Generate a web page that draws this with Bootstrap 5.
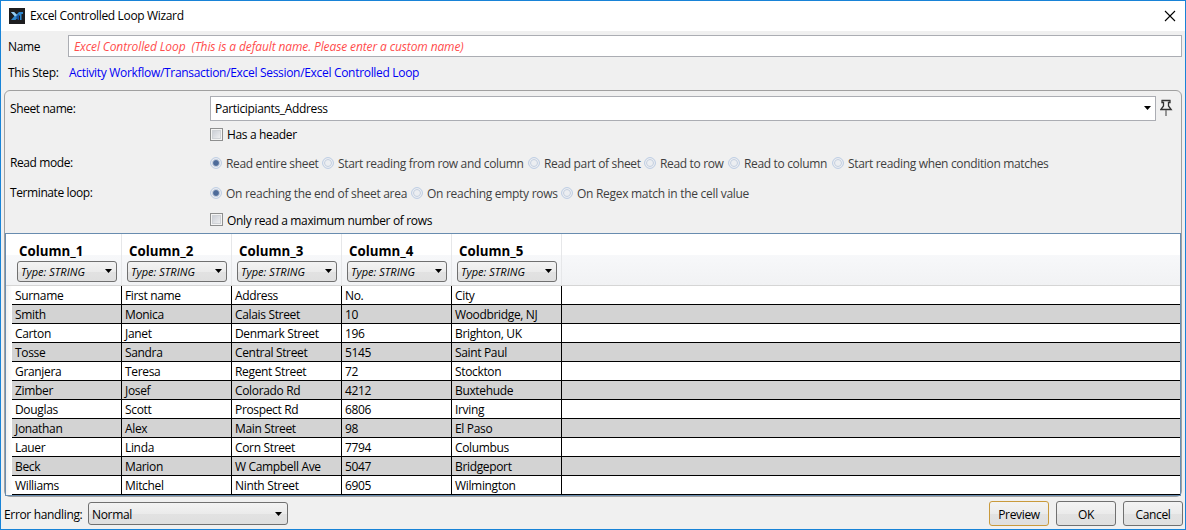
<!DOCTYPE html>
<html lang="en">
<head>
<meta charset="utf-8">
<title>Excel Controlled Loop Wizard</title>
<link href="https://cdn.jsdelivr.net/npm/bootstrap@5.3.0/dist/css/bootstrap.min.css" rel="stylesheet">
<style>
body{font:12px/16px "Open Sans","Noto Sans",sans-serif;letter-spacing:-.34px;color:#000;background:#f0f0f0}
.win{width:1186px;height:530px;border:1px solid #1883d7;background:#f0f0f0;overflow:hidden;white-space:nowrap}
.titlebar{height:30px;background:#fff;padding:0 9px 0 8px}
.titlebar span{margin-left:5px}
.field{background:#fff;border:1px solid #abadb3}
.name-row{height:22px;margin:4px 3px 0 7px}
.name-row .cap{width:60px;padding-top:2px}
.name-row .field{height:22px;padding:3px 5px;color:#ff4d4d;font-style:italic;letter-spacing:-.12px}
.step-row{height:34px;padding-left:7px;padding-bottom:1px}
.step-row .cap{width:61px}
.step-row a{color:#0000f5;letter-spacing:-.31px}
.group{height:408px;margin:-1px 3px 0 3px;border:1px solid #a0a0a0;border-radius:6px}
.cap2{width:205px;padding-left:5px;flex:none;letter-spacing:-.4px}
.sheet-row{height:35px}
.sheet-row span{padding-top:2px}
.header-row{height:18px}
.read-row{height:38px;padding-top:1px}
.term-row{height:23px}
.max-row{height:28px;padding-top:1px}
.sheet{height:25px;width:946px;padding:0 4px 0 4px}
.chk{width:13px;height:13px;border:1px solid #8e8f8f;background:linear-gradient(135deg,#c3c7d0,#f6f6f6);box-shadow:inset 0 0 0 1px #f4f4f4,inset 0 0 0 2px #cfd2d6;margin-right:4px}
.header-row .chk{margin-top:-1px}
.header-row span{padding-top:1px}
.max-row .chk+span{padding-top:3px}
.opt{color:#3f3f3f}
.opt svg{margin-right:4px}
.opt span{padding-top:2px}
.term-row .opt{position:relative;letter-spacing:-.29px}
.grid{height:263px;border:1px solid #688caf;background:#fff}
.ghead{height:52px;background:linear-gradient(#fff 0,#fff 21px,#f7f8fa 21px,#f1f2f4 51px);border-bottom:1px solid #d5d5d5;padding-left:6px}
.gcol{width:110px;border-right:1px solid #e6e7e9;padding:8px 0 0 5px}
.gcol b{display:block;font-size:13.3px;line-height:18px;padding-left:2px;margin-bottom:1px;letter-spacing:0}
.combo{border:1px solid #707070;border-radius:3px;background:linear-gradient(#f3f3f3,#ebebeb 50%,#e2e2e2 51%,#dfdfdf)}
.gcol .combo{width:100px;height:21px;padding:0 4px 0 3px;font-size:11px;font-style:italic;letter-spacing:.04px}
.gcol .combo span{padding-top:1px}
.grow{height:19px;padding-left:6px;background:linear-gradient(90deg,#f0f0f0 0,#fff 6px)}
.gline{border-bottom:1px solid #000;background:#fff}
.grow:nth-child(even) .gline{background:#d3d3d3}
.gcell{width:110px;border-right:1px solid #000;padding:2px 0 0 3px}
.foot{height:32px;padding:0 2px 0 3px}
.foot>span{width:84px;padding-top:4px}
.foot .combo{width:200px;height:23px;margin-top:1px;padding:0 5px 0 3px}
.foot .combo span{padding-top:2px}
.wbtn{width:60px;height:25px;border:1px solid #707070;border-radius:3px;background:linear-gradient(#f3f3f3,#ebebeb 50%,#e2e2e2 51%,#dfdfdf);color:#000;font-size:12px;line-height:16px;padding:3px 0 0;letter-spacing:-.34px}
.wbtn.hot{border-color:#c99a3c}
</style>
</head>
<body>
<div class="win d-flex flex-column">
  <header class="titlebar d-flex align-items-center">
    <svg width="16" height="16"><rect width="16" height="16" fill="#1d1d1f"/><path d="M2 4h3l2.500 2.500L10 4h4v2h-1.500v6H11V7L6.500 12H2l3.500-4z" fill="#2f86cc"/><path d="M2 4h3l3 3-2 1.500z" fill="#9bcdf0"/><path d="M7 9l3-3v6H9z" fill="#164f9c"/></svg>
    <span class="flex-grow-1">Excel Controlled Loop Wizard</span>
    <svg width="12" height="12"><path d="M1 1l10 10M11 1L1 11" stroke="#000" stroke-width="1.1"/></svg>
  </header>
  <div class="name-row d-flex align-items-center"><span class="cap">Name</span><div class="field flex-grow-1">Excel Controlled Loop&nbsp; (This is a default name. Please enter a custom name)</div></div>
  <div class="step-row d-flex align-items-center"><span class="cap">This Step:</span><a class="text-decoration-none">Activity Workflow/Transaction/Excel Session/Excel Controlled Loop</a></div>
  <main class="group">
    <div class="sheet-row d-flex align-items-center"><span class="cap2">Sheet name:</span>
      <div class="field sheet d-flex align-items-center justify-content-between flex-shrink-0"><span>Participiants_Address</span><svg width="7" height="4"><path d="M0 0h7L3.500 4z"/></svg></div>
      <svg width="14" height="18" class="ms-1"><path d="M1.500 1.500h9M2 1v2.500h1.500v3.500L.8 10.500h10.400L8.500 7V3.500H10V1" fill="none" stroke="#333" stroke-width="1.300"/><path d="M6 11v6" stroke="#777" stroke-width="1.500"/></svg></div>
    <div class="header-row d-flex align-items-center"><span class="cap2"></span><i class="chk"></i><span>Has a header</span></div>
    <div class="read-row d-flex align-items-center" id="read"><span class="cap2">Read mode:</span></div>
    <div class="term-row d-flex align-items-center" id="term"><span class="cap2">Terminate loop:</span></div>
    <div class="max-row d-flex align-items-center"><span class="cap2"></span><i class="chk"></i><span>Only read a maximum number of rows</span></div>
    <div class="grid"><div class="ghead d-flex" id="head"></div><div id="rows"></div></div>
  </main>
  <footer class="foot d-flex align-items-center"><span>Error handling:</span>
    <div class="combo d-flex align-items-center justify-content-between"><span>Normal</span><svg width="7" height="4"><path d="M0 0h7L3.500 4z"/></svg></div>
    <div class="d-flex ms-auto" style="gap:7px"><button class="btn wbtn hot">Preview</button><button class="btn wbtn">OK</button><button class="btn wbtn">Cancel</button></div>
  </footer>
</div>
<script src="https://cdn.jsdelivr.net/npm/bootstrap@5.3.0/dist/js/bootstrap.bundle.min.js"></script>
<script>
const radio = on => `<svg width="12" height="12"><circle cx="6" cy="6" r="5.400" fill="#f0f1f3" stroke="#b9cae2"/><circle cx="6" cy="6" r="3.500" fill="${on ? '#4d6b9a' : '#eceef1'}" stroke="${on ? '#c9d3e2' : '#c3cfe0'}"/></svg>`;
const fill = (id, list) => list.forEach(([t, w], i) => document.getElementById(id).insertAdjacentHTML('beforeend', `<div class="opt d-flex align-items-center" style="width:${w}px">${radio(!i)}<span>${t}</span></div>`));
fill('read', [['Read entire sheet',112],['Start reading from row and column',206],['Read part of sheet',116],['Read to row',84],['Read to column',104],['Start reading when condition matches',230]]);
fill('term', [['On reaching the end of sheet area',201],['On reaching empty rows',150],['On Regex match in the cell value',200]]);
for (let i = 1; i < 6; i++) head.insertAdjacentHTML('beforeend', `<div class="gcol"><b>Column_${i}</b><div class="combo d-flex align-items-center justify-content-between"><span>Type: STRING</span><svg width="7" height="4"><path d="M0 0h7L3.500 4z"/></svg></div></div>`);
`Surname|First name|Address|No.|City
Smith|Monica|Calais Street|10|Woodbridge, NJ
Carton|Janet|Denmark Street|196|Brighton, UK
Tosse|Sandra|Central Street|5145|Saint Paul
Granjera|Teresa|Regent Street|72|Stockton
Zimber|Josef|Colorado Rd|4212|Buxtehude
Douglas|Scott|Prospect Rd|6806|Irving
Jonathan|Alex|Main Street|98|El Paso
Lauer|Linda|Corn Street|7794|Columbus
Beck|Marion|W Campbell Ave|5047|Bridgeport
Williams|Mitchel|Ninth Street|6905|Wilmington`.split('\n').forEach(r => rows.insertAdjacentHTML('beforeend',
  `<div class="grow"><div class="gline d-flex h-100">${r.split('|').map(c => `<div class="gcell">${c}</div>`).join('')}</div></div>`));
</script>
</body>
</html>
